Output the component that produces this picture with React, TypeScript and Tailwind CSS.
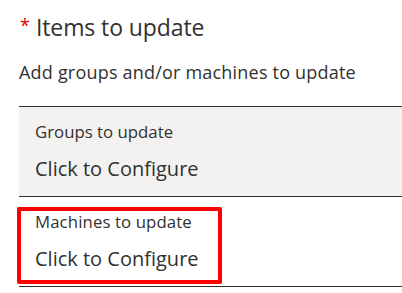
export default function App() {
  return (
    <div
      className="w-[402px] h-[293px] bg-white text-[#323130] overflow-hidden"
      style={{ fontFamily: '"Open Sans", "Noto Sans", sans-serif' }}
    >
      <div className="pl-[19px] pt-[11px]">
        <div className="flex items-start h-[32px] text-[23px] leading-[32px]">
          <span className="text-[#e50000] text-[18px] leading-[28px] mr-[6px] ml-[1px]">*</span>
          <span className="tracking-[-0.1px]">Items to update</span>
        </div>
        <div className="mt-[17px] text-[18px] leading-[24px] tracking-[0.2px]">Add groups and/or machines to update</div>

        <div className="mt-[22px] border-t border-[#323130] border-b bg-[#f3f2f1] h-[91px] pl-[16px] pt-[14px]">
          <div className="text-[16.8px] leading-[22px]">Groups to update</div>
          <div className="mt-[13px] text-[20px] leading-[26px]">Click to Configure</div>
        </div>

        <div className="relative border-b border-[#323130] h-[90px] pl-[16px] pt-[14px]">
          <div className="text-[16.8px] leading-[22px] tracking-[0.1px]">Machines to update</div>
          <div className="mt-[13px] text-[20px] leading-[26px]">Click to Configure</div>
          <div className="absolute left-[-2px] top-[10px] w-[205px] h-[77px] border-4 border-[#ff0000] rounded-[2px]" />
        </div>
      </div>
    </div>
  );
}
